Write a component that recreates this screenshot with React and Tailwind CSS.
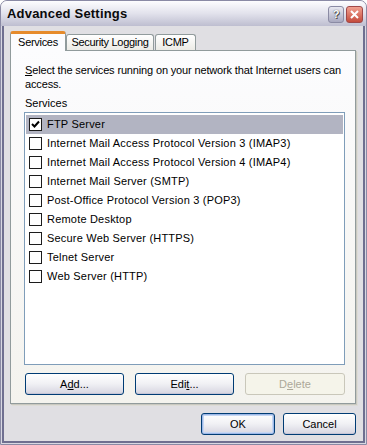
const services = [
  { name: "FTP Server", checked: true },
  { name: "Internet Mail Access Protocol Version 3 (IMAP3)" },
  { name: "Internet Mail Access Protocol Version 4 (IMAP4)" },
  { name: "Internet Mail Server (SMTP)" },
  { name: "Post-Office Protocol Version 3 (POP3)" },
  { name: "Remote Desktop" },
  { name: "Secure Web Server (HTTPS)" },
  { name: "Telnet Server" },
  { name: "Web Server (HTTP)" },
];

function Checkbox({ checked }) {
  return (
    <div className="w-[13px] h-[13px] border border-[#1c1c1c] bg-white flex items-center justify-center shrink-0">
      {checked && (
        <svg width="9" height="9" viewBox="0 0 9 9">
          <path d="M1 4 L3.5 6.5 L8 1.5" stroke="#000" strokeWidth="2" fill="none" />
        </svg>
      )}
    </div>
  );
}

function XpButton({ children, className = "", disabled, isDefault }) {
  if (disabled) {
    return (
      <div className={`h-[22px] rounded-[3px] border border-[#c9c7ba] bg-[#f5f4ea] text-[#aca899] flex items-center justify-center ${className}`}>
        {children}
      </div>
    );
  }
  return (
    <div
      className={`h-[22px] rounded-[3px] border border-[#003c74] bg-gradient-to-b from-white via-[#f0f0f4] to-[#d6d5e0] flex items-center justify-center ${
        isDefault ? "shadow-[inset_0_0_0_1px_#9db8e8,inset_0_0_0_2px_#c6d7f2]" : "shadow-[inset_0_-1px_0_#c6c5d7]"
      } ${className}`}
    >
      {children}
    </div>
  );
}

export default function App() {
  return (
    <div
      className="w-[367px] h-[445px] flex flex-col rounded-t-[7px] overflow-hidden border border-[#8a8aa5] bg-[#d8d8e2] text-[11px] text-black"
      style={{ fontFamily: '"Liberation Sans", Arial, sans-serif' }}
    >
      {/* title bar */}
      <div className="h-[25px] shrink-0 flex items-center pl-[6px] pr-[3px] bg-gradient-to-b from-[#fdfdff] via-[#e2e2ec] to-[#bebed0]">
        <div className="flex-1 text-[13px] font-bold tracking-[0.2px] text-[#0a0a0a] pt-[1px]">Advanced Settings</div>
        <div className="flex gap-[2px] mt-[1px]">
          <div className="w-[16px] h-[17px] rounded-[3px] border border-[#8b8ba4] bg-gradient-to-b from-[#e8e8f0] to-[#a9a9c0] flex items-center justify-center text-white font-bold text-[11px] [text-shadow:0_0_1px_#333,1px_1px_0_#555]">
            ?
          </div>
          <div className="w-[17px] h-[17px] rounded-[3px] border border-[#a04848] bg-gradient-to-b from-[#f0a090] to-[#c44a3c] flex items-center justify-center">
            <svg width="9" height="9" viewBox="0 0 9 9">
              <path d="M1 1 L8 8 M8 1 L1 8" stroke="#fff" strokeWidth="2" />
            </svg>
          </div>
        </div>
      </div>

      {/* client area */}
      <div className="flex-1 flex flex-col px-[1px] pb-[1px]">
        <div className="flex-1 flex flex-col border-x-2 border-b-2 border-[#6f6f90] bg-[#e0dfe3] px-[6px] pt-[5px]">
          {/* tabs */}
          <div className="flex items-end h-[19px] relative z-10 tracking-[-0.3px]">
            <div className="w-[56px] h-[20px] -mb-[1px] flex items-center justify-center bg-[#fcfcfe] border-x border-[#919b9c] rounded-t-[3px] border-t-[3px] border-t-[#e68b2c]">
              Services
            </div>
            <div className="w-[88px] h-[16px] flex items-center justify-center bg-gradient-to-b from-white to-[#ecebe6] border border-[#919b9c] border-b-0 rounded-t-[3px]">
              Security Logging
            </div>
            <div className="w-[41px] h-[16px] ml-[1px] flex items-center justify-center bg-gradient-to-b from-white to-[#ecebe6] border border-[#919b9c] border-b-0 rounded-t-[3px]">
              ICMP
            </div>
          </div>

          {/* panel */}
          <div className="w-[346px] h-[354px] border border-[#919b9c] bg-gradient-to-b from-[#fcfcfe] to-[#f4f3ee] shadow-[1px_1px_0_#c9c8c0,2px_2px_0_#dddcd6] flex flex-col pl-[13px]">
            <p className="mt-[12px] pl-[1px] leading-[14px] whitespace-nowrap tracking-[-0.15px]">
              <span className="underline">S</span>elect the services running on your network that Internet users can
              <br />
              access.
            </p>
            <div className="mt-[5px] pl-[1px] leading-[14px]">Services</div>
            <div className="mt-[2px] w-[321px] h-[253px] border border-[#7f9db9] bg-white px-[1px] py-[2px]">
              {services.map((s) => (
                <div
                  key={s.name}
                  className={`h-[19px] flex items-center pl-[3px] gap-[5px] ${s.checked ? "bg-[#b2b4c2]" : ""}`}
                >
                  <Checkbox checked={s.checked} />
                  <span className="tracking-[0.2px]">{s.name}</span>
                </div>
              ))}
            </div>
            <div className="mt-[8px] flex gap-[11px] pl-[1px]">
              <XpButton className="w-[99px]">
                A<span className="underline">d</span>d...
              </XpButton>
              <XpButton className="w-[99px]">
                Edi<span className="underline">t</span>...
              </XpButton>
              <XpButton className="w-[100px]" disabled>
                D<span className="underline">e</span>lete
              </XpButton>
            </div>
          </div>

          {/* dialog buttons */}
          <div className="mt-[9px] flex justify-end gap-[8px] pr-[1px]">
            <XpButton className="w-[74px]" isDefault>
              OK
            </XpButton>
            <XpButton className="w-[73px]">Cancel</XpButton>
          </div>
        </div>
      </div>
    </div>
  );
}
